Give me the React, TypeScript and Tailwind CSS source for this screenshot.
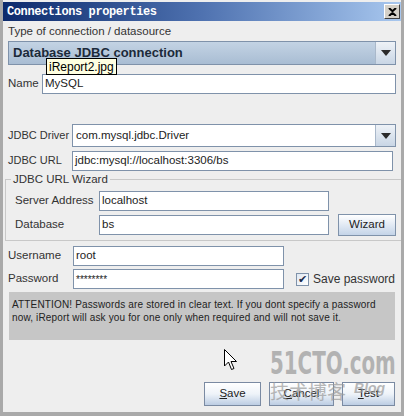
import React from "react";

const font = { fontFamily: '"Liberation Sans", Arial, sans-serif' };

export default function App() {
  return (
    <div
      className="relative flex h-[416px] w-[404px] flex-col overflow-hidden border-x-[3px] border-b-[4px] border-[#a9a9a9] bg-[#eeeeee] text-[11.5px] text-[#222]"
      style={font}
    >
      <TitleBar />

      <div className="flex flex-1 flex-col px-[5px]">
        <div className="mt-[3px] h-[14px] whitespace-nowrap leading-[14px] text-[#333]">
          Type of connection / datasource
        </div>

        <div className="mt-[3px] flex h-[24px] border border-[#7f92aa] bg-gradient-to-b from-[#c3d3e4] to-[#a9bdd3]">
          <div className="flex-1 pl-[4px] text-[13px] font-bold leading-[22px] text-[#1c2a3a]">
            Database JDBC connection
          </div>
          <ArrowButton />
        </div>

        <div className="mt-[9px] flex h-[20px] items-center">
          <div className="w-[34px] whitespace-nowrap text-[#333]">Name</div>
          <Field value="MySQL" className="flex-1" />
        </div>

        <div className="mt-[30px] flex h-[23px] items-center">
          <div className="w-[64px] whitespace-nowrap text-[11px] text-[#333]">JDBC Driver</div>
          <div className="flex h-[23px] flex-1 border border-[#7f92aa] bg-white">
            <div className="flex-1 pl-[3px] leading-[21px]">com.mysql.jdbc.Driver</div>
            <ArrowButton />
          </div>
        </div>

        <div className="mt-[3px] flex h-[21px] items-center pr-[3px]">
          <div className="w-[64px] whitespace-nowrap text-[11px] text-[#333]">JDBC URL</div>
          <Field value="jdbc:mysql://localhost:3306/bs" className="flex-1" />
        </div>

        <fieldset className="mx-[-3px] mt-[2px] h-[68px] border border-[#c8c8c8] px-[9px] pt-[5px]">
          <legend className="ml-[-4px] whitespace-nowrap px-[2px] leading-[13px] text-[#333]">JDBC URL Wizard</legend>
          <div className="flex h-[20px] items-center">
            <div className="w-[84px] whitespace-nowrap text-[#333]">Server Address</div>
            <Field value="localhost" className="w-[230px]" />
          </div>
          <div className="mt-[3px] flex h-[22px] items-center">
            <div className="w-[84px] whitespace-nowrap text-[#333]">Database</div>
            <Field value="bs" className="w-[230px]" />
            <button className="ml-[9px] h-[22px] w-[58px] border border-[#7f92aa] bg-gradient-to-b from-[#ffffff] to-[#c4d4e8] text-[11.5px] text-[#222]">
              Wizard
            </button>
          </div>
        </fieldset>

        <div className="mt-[5px] flex h-[20px] items-center">
          <div className="w-[65px] whitespace-nowrap text-[#333]">Username</div>
          <Field value="root" className="w-[211px]" />
        </div>

        <div className="mt-[3px] flex h-[20px] items-center">
          <div className="w-[65px] whitespace-nowrap text-[#333]">Password</div>
          <Field value="********" className="w-[211px] text-[10px]" />
          <div className="ml-[12px] flex h-[13px] w-[13px] items-center justify-center border border-[#7f92aa] bg-gradient-to-br from-[#dfe7f1] to-[#ffffff] text-[11px] leading-none text-[#1a2a4a]">
            ✔
          </div>
          <div className="ml-[4px] whitespace-nowrap text-[12px] text-[#333]">Save password</div>
        </div>

        <div className="mx-[1px] mt-[3px] h-[48px] bg-[#c6c6c6] px-[3px] pt-[6px] text-[10px] leading-[13px] tracking-[0.15px] text-[#222]">
          ATTENTION! Passwords are stored in clear text. If you dont specify a password now, iReport will ask you for one only when required and will not save it.
        </div>

        <div className="mt-[42px] flex h-[24px] justify-end gap-[8px] pr-[1px]">
          <DialogButton label="Save" width="w-[57px]" />
          <DialogButton label="Cancel" width="w-[65px]" />
          <DialogButton label="Test" width="w-[53px]" />
        </div>
      </div>

      <Tooltip />
      <Cursor />
      <Watermark />
    </div>
  );
}

function TitleBar() {
  return (
    <div className="mx-[-1px] mt-[2px] flex h-[19px] items-center bg-gradient-to-r from-[#0c2a6c] via-[#4f72b0] to-[#a9c8ef] pl-[5px] pr-[2px]">
      <div
        className="flex-1 text-[12px] font-bold tracking-[-0.4px] text-white"
        style={{ fontFamily: '"Liberation Mono", "DejaVu Sans Mono", monospace' }}
      >
        Connections properties
      </div>
      <div className="flex h-[15px] w-[16px] items-center justify-center border border-b-[#404040] border-l-white border-r-[#404040] border-t-white bg-[#d4d0c8]">
        <svg width="9" height="8" viewBox="0 0 9 8">
          <path d="M1 0 L4.5 3.2 L8 0 M1 8 L4.5 4.8 L8 8" stroke="#000" strokeWidth="2" fill="none" />
        </svg>
      </div>
    </div>
  );
}

function ArrowButton() {
  return (
    <div className="flex w-[20px] items-center justify-center border-l border-[#a9b8ca] bg-gradient-to-b from-[#eef2f7] to-[#c9d6e5]">
      <svg width="10" height="6" viewBox="0 0 10 6">
        <path d="M0 0 H10 L5 6 Z" fill="#2a2a2a" />
      </svg>
    </div>
  );
}

function Field({ value, className }: { value: string; className?: string }) {
  return (
    <div
      className={`flex h-[20px] items-center whitespace-nowrap border border-[#7f92aa] bg-white pl-[2px] text-[#222] ${className ?? ""}`}
    >
      {value}
    </div>
  );
}

function DialogButton({ label, width }: { label: string; width: string }) {
  return (
    <button
      className={`h-[24px] ${width} border border-[#7a8aa2] bg-gradient-to-b from-[#ffffff] via-[#eef3f9] to-[#bccde3] text-[11.5px] text-[#222]`}
    >
      <span className="underline underline-offset-1">{label[0]}</span>
      {label.slice(1)}
    </button>
  );
}

function Tooltip() {
  return (
    <div className="absolute left-[43px] top-[58px] flex h-[17px] items-center border border-black bg-[#ffffe1] px-[2px] text-[12px] text-black">
      iReport2.jpg
    </div>
  );
}

function Cursor() {
  return (
    <svg className="absolute left-[221px] top-[349px]" width="13" height="22" viewBox="0 0 13 22">
      <path
        d="M0.5 0.5 V17 L4.5 13 L7.5 20.5 L10 19.5 L7 12.5 H12.5 Z"
        fill="#fff"
        stroke="#000"
        strokeWidth="1"
      />
    </svg>
  );
}

function Watermark() {
  return (
    <div className="pointer-events-none absolute left-[267px] top-[346px] w-[128px] text-[#9a9a9a] opacity-70">
      <div
        className="w-[200px] origin-top-left whitespace-nowrap text-[32px] font-bold leading-[34px] [transform:scaleX(0.62)]"
        style={{ fontFamily: '"DejaVu Sans", sans-serif' }}
      >
        51CTO.com
      </div>
      <div className="flex items-end gap-[8px] whitespace-nowrap">
        <span className="text-[19px] leading-[22px]" style={{ fontFamily: '"Noto Sans CJK SC", sans-serif' }}>
          技术博客
        </span>
        <span className="mb-[6px] text-[14px] font-bold italic leading-[16px]">Blog</span>
      </div>
    </div>
  );
}
